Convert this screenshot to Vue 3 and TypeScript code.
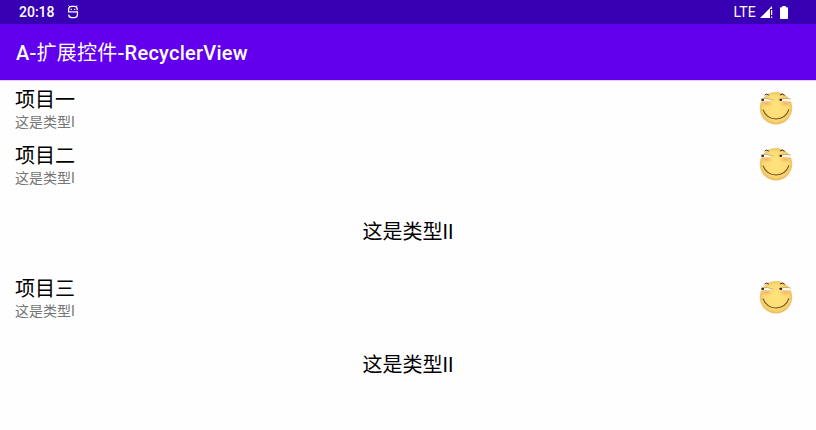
<script setup lang="ts">
interface ItemRow {
  kind: 'item'
  title: string
  subtitle: string
}
interface BannerRow {
  kind: 'banner'
  title: string
}
type Row = ItemRow | BannerRow

const rows: Row[] = [
  { kind: 'item', title: '项目一', subtitle: '这是类型I' },
  { kind: 'item', title: '项目二', subtitle: '这是类型I' },
  { kind: 'banner', title: '这是类型II' },
  { kind: 'item', title: '项目三', subtitle: '这是类型I' },
  { kind: 'banner', title: '这是类型II' },
]
</script>

<template>
  <div class="screen">
    <header class="status-bar">
      <span class="clock">20:18</span>
      <svg class="notification" viewBox="0 0 12 14" fill="none" stroke="currentColor">
        <path d="M1.6 7V4.6Q1.6 1.4 4.4 1.4H7.4Q10.2 1.4 10.2 4.4V5.2M1 6.8H10.4V9.5Q10.4 12.6 7.2 12.6H4.8Q1.8 12.6 1.6 9.6" stroke-width="1.25" />
        <path d="M1.6 .5L3 2M10.2 .5L8.8 2" stroke-width="1" />
        <path d="M3.6 4.3H4.9M7 4.3H8.3" stroke-width="1.3" />
      </svg>
      <span class="spacer"></span>
      <span class="network">LTE</span>
      <svg class="signal" viewBox="0 0 13 12" fill="currentColor">
        <path d="M0 12L12 0V3H10V12Z" />
        <path d="M11 4H12.2V9H11ZM11 10.4H12.2V12H11Z" />
      </svg>
      <svg class="battery" viewBox="0 0 8 13" fill="currentColor">
        <path d="M2.3 0H5.7V1.3H7.2Q8 1.3 8 2.1V12.2Q8 13 7.2 13H.8Q0 13 0 12.2V2.1Q0 1.3.8 1.3H2.3Z" />
      </svg>
    </header>

    <div class="app-bar">
      <h1>A-<span class="han">扩展控件</span>-RecyclerView</h1>
    </div>

    <main class="list">
      <template v-for="(row, index) in rows" :key="index">
        <section v-if="row.kind === 'item'" class="item">
          <div class="labels">
            <div class="title">{{ row.title }}</div>
            <div class="subtitle">{{ row.subtitle }}</div>
          </div>
          <svg class="face" viewBox="0 0 40 40">
            <defs>
              <radialGradient :id="`skin-${index}`" cx="50%" cy="48%" r="53%">
                <stop offset="0" stop-color="#ffe47c" />
                <stop offset=".7" stop-color="#fbdc74" />
                <stop offset=".91" stop-color="#f0c566" />
                <stop offset="1" stop-color="#e3b263" />
              </radialGradient>
              <radialGradient :id="`blush-${index}`">
                <stop offset="0" stop-color="#f5a070" stop-opacity=".75" />
                <stop offset="1" stop-color="#f5b070" stop-opacity="0" />
              </radialGradient>
            </defs>
            <circle cx="20" cy="20.3" r="16.2" :fill="`url(#skin-${index})`" />
            <ellipse cx="10.5" cy="15.4" rx="6.5" ry="3.6" :fill="`url(#blush-${index})`" />
            <ellipse cx="29.5" cy="15.4" rx="6.5" ry="3.6" :fill="`url(#blush-${index})`" />
            <path d="M5.2 11.2Q10 9.4 17.2 12.3Q12 13.4 5.2 13.2ZM22.8 12.3Q28 9.5 36.2 11.6L35.7 13.2Q29 13.7 22.8 12.3Z" fill="#fffdf4" />
            <path d="M5.2 10.9Q11 9.4 17.4 12.3M22.8 11.6Q28 9.4 35 11" fill="none" stroke="#967957" stroke-width=".5" />
            <ellipse cx="6.7" cy="11.9" rx="1.4" ry="1.15" fill="#2b2020" />
            <ellipse cx="24.8" cy="11.9" rx="1.4" ry="1.1" fill="#2b2020" />
            <path d="M8.6 7.1Q10.6 5 12.8 7M24.2 7Q26.8 4.9 28.6 7.3" fill="none" stroke="#39291d" stroke-width="1" />
            <path d="M7 21.6Q10.5 30.8 20 31Q29.6 30.8 33 21.4" fill="none" stroke="#70501f" stroke-width="1.1" />
          </svg>
        </section>
        <section v-else class="banner">{{ row.title }}</section>
      </template>
    </main>
  </div>
</template>

<style>
body {
  margin: 0;
  background: #fefefe;
}
</style>

<style scoped>
.screen {
  height: 430px;
  overflow: hidden;
  background: #fefefe;
  color: #000;
  font-family: Roboto, "Noto Sans CJK SC", sans-serif;
}
.status-bar {
  box-sizing: border-box;
  height: 24px;
  padding: 0 28px 0 19px;
  display: flex;
  align-items: center;
  background: #3800b3;
  color: #fff;
  font-size: 14px;
  font-weight: 500;
}
.clock {
  line-height: 24px;
}
.notification {
  width: 12px;
  height: 14px;
  margin-left: 12px;
}
.spacer {
  flex: 1;
}
.network {
  font-weight: 400;
  letter-spacing: 0.2px;
}
.signal {
  width: 13px;
  height: 12px;
  margin-left: 4px;
}
.battery {
  width: 8px;
  height: 13px;
  margin-left: 7px;
}
.app-bar {
  box-sizing: border-box;
  height: 56px;
  padding: 2px 0 0 16px;
  display: flex;
  align-items: center;
  background: #6200ee;
  box-shadow: 0 1px 1px rgba(98, 0, 238, 0.18);
  color: #fff;
}
h1 {
  margin: 0;
  font-size: 20px;
  line-height: 28px;
  font-weight: 500;
  letter-spacing: 0.25px;
}
.han {
  font-weight: 400;
}
.item {
  box-sizing: border-box;
  height: 56px;
  padding: 0 20px 0 15px;
  display: flex;
  align-items: center;
  justify-content: space-between;
}
.labels {
  padding-top: 4px;
}
.title {
  font-size: 20px;
  line-height: 24px;
}
.subtitle {
  color: #757575;
  font-size: 14px;
  line-height: 20px;
}
.face {
  width: 40px;
  height: 40px;
}
.banner {
  height: 77px;
  display: flex;
  align-items: center;
  justify-content: center;
  font-size: 20px;
}
</style>
